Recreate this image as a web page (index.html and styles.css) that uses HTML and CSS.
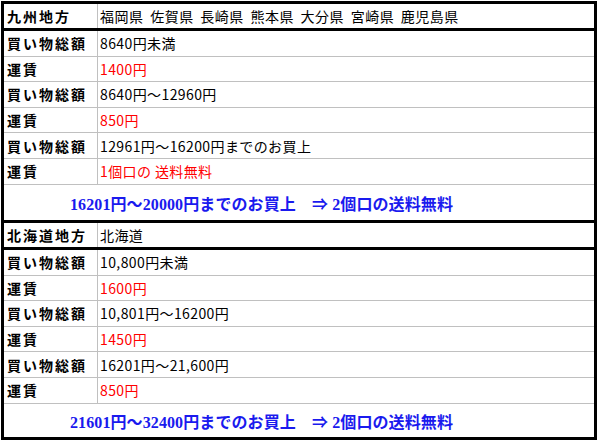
FILE: index.html
```html
<!DOCTYPE html>
<html lang="ja">
<head>
<meta charset="utf-8">
<title>送料</title>
<link rel="stylesheet" href="styles.css">
</head>
<body>
<div class="box">
  <section class="region first">
    <div class="row head"><div class="k">九州地方</div><div class="v pref">福岡県 佐賀県 長崎県 熊本県 大分県 宮崎県 鹿児島県</div></div>
    <div class="row"><div class="k">買い物総額</div><div class="v">8640円未満</div></div>
    <div class="row"><div class="k">運賃</div><div class="v red">1400円</div></div>
    <div class="row"><div class="k">買い物総額</div><div class="v">8640円～12960円</div></div>
    <div class="row"><div class="k">運賃</div><div class="v red">850円</div></div>
    <div class="row"><div class="k">買い物総額</div><div class="v">12961円～16200円までのお買上</div></div>
    <div class="row"><div class="k">運賃</div><div class="v red">1個口の 送料無料</div></div>
    <div class="note">16201円～20000円までのお買上　⇒ 2個口の送料無料</div>
  </section>
  <section class="region second">
    <div class="row head"><div class="k">北海道地方</div><div class="v">北海道</div></div>
    <div class="row"><div class="k">買い物総額</div><div class="v">10,800円未満</div></div>
    <div class="row"><div class="k">運賃</div><div class="v red">1600円</div></div>
    <div class="row"><div class="k">買い物総額</div><div class="v">10,801円～16200円</div></div>
    <div class="row"><div class="k">運賃</div><div class="v red">1450円</div></div>
    <div class="row"><div class="k">買い物総額</div><div class="v">16201円～21,600円</div></div>
    <div class="row"><div class="k">運賃</div><div class="v red">850円</div></div>
    <div class="note">21601円～32400円までのお買上　⇒ 2個口の送料無料</div>
  </section>
</div>
</body>
</html>
```

FILE: styles.css
```css
body {
  margin: 0;
  background: #fff;
}

.box {
  margin: 1px 0 0 1px;
  width: 596px;
  height: 439px;
  box-sizing: border-box;
  border: 3px solid #000;
  font-family: "Noto Sans CJK JP", sans-serif;
  color: #000;
}

.region + .region {
  border-top: 3px solid #000;
}

.row {
  display: flex;
  height: 25.6px;
  box-sizing: border-box;
  border-bottom: 1px solid #c0c0c0;
}

.row.head {
  height: 27px;
  border-bottom: 3px solid #000;
}

.k {
  width: 94px;
  flex: none;
  box-sizing: border-box;
  border-right: 1px solid #c0c0c0;
  padding-left: 3px;
  font-weight: bold;
  font-size: 14px;
  letter-spacing: 2px;
  line-height: 20px;
  display: flex;
  align-items: center;
  white-space: nowrap;
}

.v {
  flex: 1;
  padding-left: 2px;
  font-size: 14px;
  letter-spacing: 0.4px;
  line-height: 20px;
  display: flex;
  align-items: center;
  white-space: nowrap;
}

.pref {
  letter-spacing: 0.5px;
  word-spacing: 3px;
}

.red {
  color: #ff0000;
}

.note {
  display: flex;
  align-items: center;
  box-sizing: border-box;
  padding: 6px 0 0 66px;
  font-family: "Liberation Serif", "Noto Sans CJK JP", serif;
  font-weight: bold;
  font-size: 16px;
  letter-spacing: 0.1px;
  line-height: 20px;
  color: #1a1aee;
  white-space: nowrap;
}

.first .note {
  height: 35.4px;
}

.second .note {
  height: 33.4px;
}
```
